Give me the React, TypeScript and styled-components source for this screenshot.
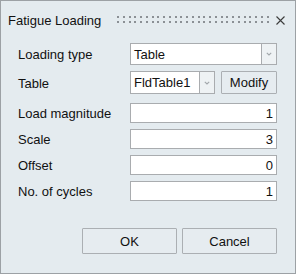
import React from 'react';
import styled, { createGlobalStyle } from 'styled-components';

const GlobalStyle = createGlobalStyle`
	html, body {
		margin: 0;
		padding: 0;
		background: #e4ebef;
	}
	* {
		box-sizing: border-box;
	}
`;

const Dialog = styled.div`
	width: 296px;
	height: 274px;
	border: 1px solid #9ca1a5;
	background: #e4ebef;
	font-family: 'Liberation Sans', Arial, sans-serif;
	font-size: 13px;
	color: #111;
	display: flex;
	flex-direction: column;
`;

const TitleBar = styled.div`
	height: 38px;
	display: flex;
	align-items: center;
	padding: 0 10px 0 7px;
	line-height: 15px;
`;

const Title = styled.span`
	white-space: nowrap;
`;

const Grip = styled.svg`
	margin-left: auto;
	margin-right: 7px;
	flex: none;
`;

const CloseIcon = styled.svg`
	flex: none;
`;

const Form = styled.div`
	margin-top: 4px;
	padding: 0 18px 0 17px;
	display: flex;
	flex-direction: column;
	gap: 6px;
`;

const Row = styled.div<{ $h: number; $after?: number }>`
	display: flex;
	align-items: center;
	height: ${(p) => p.$h}px;
	margin-bottom: ${(p) => p.$after ?? 0}px;
`;

const Label = styled.div`
	width: 112px;
	flex: none;
	line-height: 15px;
	padding-top: 1px;
	white-space: nowrap;
`;

const Controls = styled.div`
	display: flex;
	align-items: stretch;
	width: 147px;
	height: 100%;
`;

const Field = styled.div<{ $w?: number }>`
	width: ${(p) => (p.$w ? `${p.$w}px` : 'auto')};
	flex: ${(p) => (p.$w ? 'none' : '1')};
	background: #fff;
	border: 1px solid #a9acaf;
	display: flex;
	align-items: center;
	padding: 0 3px;
	line-height: 15px;
	white-space: nowrap;
	overflow: hidden;
`;

const NumberInput = styled.input`
	width: 147px;
	height: 20px;
	border: 1px solid #a9acaf;
	background: #fff;
	padding: 0 3px;
	margin: 0;
	text-align: right;
	font: inherit;
	color: inherit;
	outline: none;
`;

const DropButton = styled.div`
	width: 15px;
	flex: none;
	border: 1px solid #a9acaf;
	border-left: none;
	background: #eef2f4;
	display: flex;
	align-items: center;
	justify-content: center;
`;

const PushButton = styled.button<{ $w: number; $ml?: number }>`
	width: ${(p) => p.$w}px;
	margin: 0 0 0 ${(p) => p.$ml ?? 0}px;
	flex: none;
	border: 1px solid #abafb3;
	border-radius: 1px;
	background: #e6ecf0;
	font: inherit;
	color: inherit;
	padding: 0;
	line-height: 15px;
`;

const Footer = styled.div`
	margin-top: 27px;
	padding-right: 18px;
	display: flex;
	justify-content: flex-end;
	gap: 5px;
	height: 26px;
`;

function Chevron() {
	return (
		<svg width="6" height="4" viewBox="0 0 6 4">
			<path d="M0.8 0.8 L3 3 L5.2 0.8" fill="none" stroke="#a2a7ab" strokeWidth="1.1" />
		</svg>
	);
}

function Dots() {
	const cols = Array.from({ length: 27 }, (_, i) => Math.round(i * 5.75));
	return (
		<Grip width="152" height="8" viewBox="0 0 152 8">
			{cols.map((x) => (
				<React.Fragment key={x}>
					<rect x={x} y={0} width={2} height={2} fill="#8b9095" />
					<rect x={x} y={5} width={2} height={2} fill="#8b9095" />
				</React.Fragment>
			))}
		</Grip>
	);
}

export default function App() {
	return (
		<>
			<GlobalStyle />
			<Dialog>
				<TitleBar>
					<Title>Fatigue Loading</Title>
					<Dots />
					<CloseIcon width="9" height="9" viewBox="0 0 9 9">
						<path d="M0.5 0.5 L8.5 8.5 M8.5 0.5 L0.5 8.5" stroke="#3c3c3c" strokeWidth="1.1" />
					</CloseIcon>
				</TitleBar>

				<Form>
					<Row $h={22}>
						<Label>Loading type</Label>
						<Controls>
							<Field>Table</Field>
							<DropButton>
								<Chevron />
							</DropButton>
						</Controls>
					</Row>
					<Row $h={23} $after={3}>
						<Label>Table</Label>
						<Controls>
							<Field $w={70}>FldTable1</Field>
							<DropButton>
								<Chevron />
							</DropButton>
							<PushButton $w={56} $ml={6}>
								Modify
							</PushButton>
						</Controls>
					</Row>
					<Row $h={20}>
						<Label>Load magnitude</Label>
						<NumberInput readOnly value="1" />
					</Row>
					<Row $h={20}>
						<Label>Scale</Label>
						<NumberInput readOnly value="3" />
					</Row>
					<Row $h={20}>
						<Label>Offset</Label>
						<NumberInput readOnly value="0" />
					</Row>
					<Row $h={20}>
						<Label>No. of cycles</Label>
						<NumberInput readOnly value="1" />
					</Row>
				</Form>

				<Footer>
					<PushButton $w={95}>OK</PushButton>
					<PushButton $w={95}>Cancel</PushButton>
				</Footer>
			</Dialog>
		</>
	);
}
